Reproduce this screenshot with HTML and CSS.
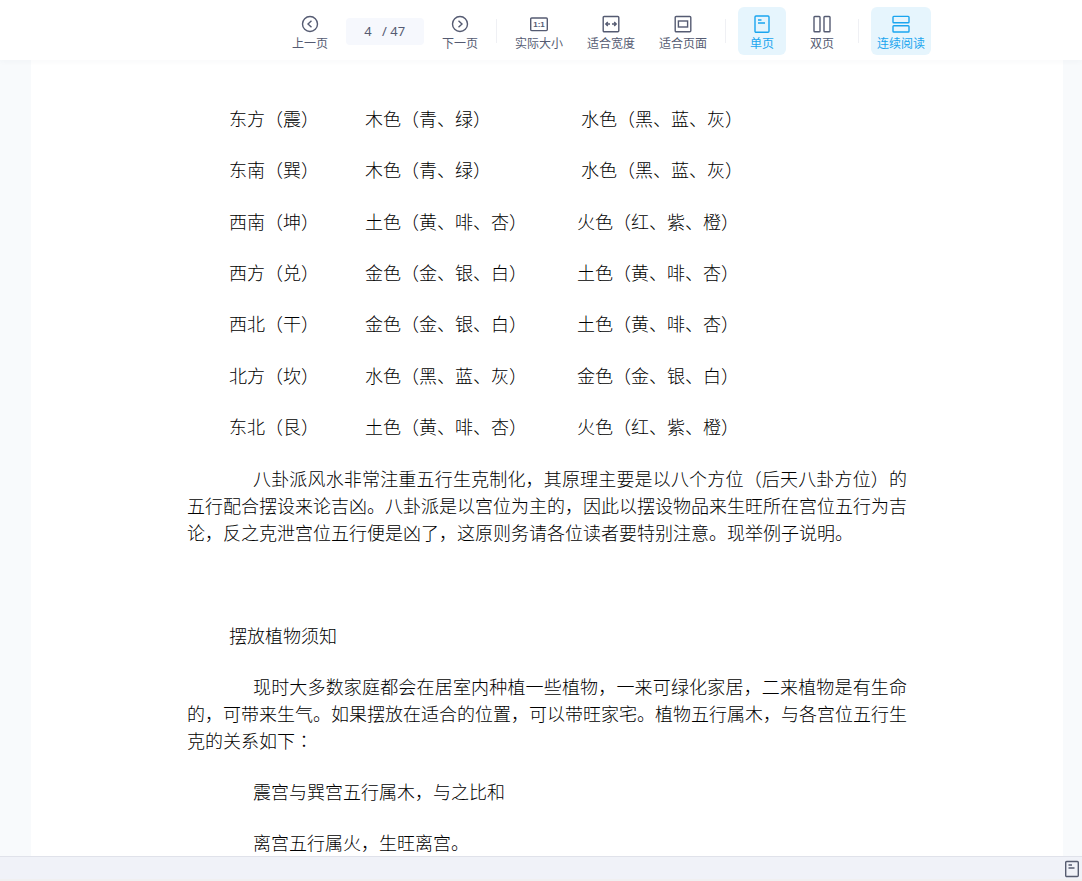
FILE: index.html
```
<!DOCTYPE html>
<html lang="zh-CN">
<head>
    <meta charset="UTF-8">
    <meta name="viewport" content="width=device-width, initial-scale=1.0">
    <title>文档阅读</title>
    <link rel="stylesheet" href="styles.css">
</head>
<body>
    <header class="toolbar">
        <button class="tool" type="button">
            <svg width="18" height="18" viewBox="0 0 18 18"><circle cx="9" cy="9" r="7.5"/><path d="M10.5 5.7L7 9l3.5 3.3"/></svg>
            <span>上一页</span>
        </button>
        <div class="pager">
            <input class="page-input" type="text" value="4" aria-label="页码">
            <span>/ 47</span>
        </div>
        <button class="tool" type="button">
            <svg width="18" height="18" viewBox="0 0 18 18"><circle cx="9" cy="9" r="7.5"/><path d="M7.5 5.7L11 9l-3.5 3.3"/></svg>
            <span>下一页</span>
        </button>
        <div class="line"></div>
        <button class="tool wide" type="button">
            <svg width="18" height="18" viewBox="0 0 18 18"><rect x="0.7" y="3" width="16.6" height="12.6" rx="1"/><text class="ratio" x="9" y="12">1:1</text></svg>
            <span>实际大小</span>
        </button>
        <button class="tool wide" type="button">
            <svg width="18" height="18" viewBox="0 0 18 18"><rect x="1.2" y="1.5" width="15.6" height="15.2" rx="1"/><path d="M8 9H3.8M5.8 7l-2 2 2 2M10 9h4.2M12.2 7l2 2-2 2"/></svg>
            <span>适合宽度</span>
        </button>
        <button class="tool wide" type="button">
            <svg width="18" height="18" viewBox="0 0 18 18"><rect x="1.2" y="1.5" width="15.6" height="15.2" rx="1"/><rect x="4.4" y="6" width="9.2" height="6"/></svg>
            <span>适合页面</span>
        </button>
        <div class="line"></div>
        <button class="tool active" type="button">
            <svg width="18" height="18" viewBox="0 0 18 18"><rect x="2" y="1" width="14" height="16.3" rx="1"/><path d="M5 5h3.5M5 8h7"/></svg>
            <span>单页</span>
        </button>
        <button class="tool" type="button">
            <svg width="18" height="18" viewBox="0 0 18 18"><rect x="1" y="1.5" width="6" height="15.2" rx="0.8"/><rect x="11" y="1.5" width="6" height="15.2" rx="0.8"/></svg>
            <span>双页</span>
        </button>
        <div class="line"></div>
        <button class="tool wide active" type="button">
            <svg width="18" height="18" viewBox="0 0 18 18"><rect x="1" y="1.4" width="16" height="6.3" rx="0.8"/><rect x="1" y="10.7" width="16" height="6.3" rx="0.8"/></svg>
            <span>连续阅读</span>
        </button>
    </header>

    <main class="viewer">
        <div class="page">
            <div class="content">
                <table class="colors">
                    <tr><td>东方（震）</td><td>木色（青、绿）</td><td class="water">水色（黑、蓝、灰）</td></tr>
                    <tr><td>东南（巽）</td><td>木色（青、绿）</td><td class="water">水色（黑、蓝、灰）</td></tr>
                    <tr><td>西南（坤）</td><td>土色（黄、啡、杏）</td><td>火色（红、紫、橙）</td></tr>
                    <tr><td>西方（兑）</td><td>金色（金、银、白）</td><td>土色（黄、啡、杏）</td></tr>
                    <tr><td>西北（干）</td><td>金色（金、银、白）</td><td>土色（黄、啡、杏）</td></tr>
                    <tr><td>北方（坎）</td><td>水色（黑、蓝、灰）</td><td>金色（金、银、白）</td></tr>
                    <tr><td>东北（艮）</td><td>土色（黄、啡、杏）</td><td>火色（红、紫、橙）</td></tr>
                </table>
                <p>八卦派风水非常注重五行生克制化，其原理主要是以八个方位（后天八卦方位）的五行配合摆设来论吉凶。八卦派是以宫位为主的，因此以摆设物品来生旺所在宫位五行为吉论，反之克泄宫位五行便是凶了，这原则务请各位读者要特别注意。现举例子说明。</p>
                <h2>摆放植物须知</h2>
                <p>现时大多数家庭都会在居室内种植一些植物，一来可绿化家居，二来植物是有生命的，可带来生气。如果摆放在适合的位置，可以带旺家宅。植物五行属木，与各宫位五行生克的关系如下∶</p>
                <p>震宫与巽宫五行属木，与之比和</p>
                <p>离宫五行属火，生旺离宫。</p>
            </div>
        </div>
    </main>

    <footer class="statusbar">
        <button class="status-btn" type="button" aria-label="单页">
            <svg width="18" height="18" viewBox="0 0 18 18"><rect x="2.7" y="1.5" width="12.6" height="15" rx="1"/><path d="M5.5 5h3.5M5.5 8h6"/></svg>
        </button>
    </footer>
</body>
</html>
```
FILE: styles.css
```
* {
    margin: 0;
    padding: 0;
    box-sizing: border-box;
}
body {
    display: flex;
    flex-direction: column;
    height: 100vh;
    overflow: hidden;
    background: #f8fafc;
    font-family: "Noto Sans CJK SC", sans-serif;
}
button {
    border: none;
    background: none;
    font-family: inherit;
    color: inherit;
    cursor: pointer;
}
svg {
    display: block;
    fill: none;
    stroke: currentColor;
    stroke-width: 1.4;
}

/* toolbar */
.toolbar {
    display: flex;
    flex: none;
    justify-content: center;
    align-items: center;
    gap: 12px;
    height: 60px;
    padding: 2px 0 0 135px;
    background: #fff;
    box-shadow: 0 1px 6px rgba(60, 70, 110, 0.04);
    position: relative;
    color: #555b72;
}
.tool {
    display: flex;
    flex-direction: column;
    align-items: center;
    width: 48px;
    height: 48px;
    padding-top: 8px;
    border-radius: 6px;
    font-size: 12px;
    line-height: 20px;
    white-space: nowrap;
}
.wide {
    width: 60px;
}
.active {
    background: #e6f5fd;
    color: #1aa5ef;
}
.ratio {
    fill: currentColor;
    stroke: none;
    font: bold 8px "Liberation Sans", sans-serif;
    text-anchor: middle;
}
.line {
    width: 1px;
    height: 24px;
    background: #eff0f4;
}
.pager {
    display: flex;
    align-items: center;
    width: 78px;
    height: 27px;
    border-radius: 4px;
    background: #f6f8fd;
    font: 13px/27px "Noto Sans", sans-serif;
}
.page-input {
    width: 36px;
    padding-left: 8px;
    border: none;
    outline: none;
    background: none;
    font: inherit;
    color: inherit;
    text-align: center;
}

/* document */
.viewer {
    flex: 1;
    min-height: 0;
    overflow: hidden;
    padding: 0 19px 0 31px;
}
.page {
    min-height: 100%;
    padding-top: 33px;
    background: #fff;
}
.content {
    max-width: 720px;
    margin: 0 auto;
    font-size: 18px;
    font-weight: 300;
    line-height: 27px;
    color: #000;
}
.colors {
    height: 359px;
    margin: 0 0 13px 42px;
    border-collapse: collapse;
    white-space: nowrap;
}
.colors td:nth-child(1) {
    width: 136px;
}
.colors td:nth-child(2) {
    width: 212px;
}
.colors .water {
    padding-left: 4px;
}
.content p {
    margin-bottom: 24px;
    text-indent: 66px;
    text-align: justify;
}
.content h2 {
    margin: 76px 0 24px;
    padding-left: 42px;
    font-size: 18px;
    font-weight: 300;
}

/* bottom bar */
.statusbar {
    display: flex;
    flex: none;
    justify-content: flex-end;
    align-items: center;
    height: 25px;
    padding: 2px 1px 0 0;
    border-top: 1px solid #e0e2ea;
    border-bottom: 2px solid #f0f0f1;
    background: #f0f2f8;
    color: #565c70;
}
```
